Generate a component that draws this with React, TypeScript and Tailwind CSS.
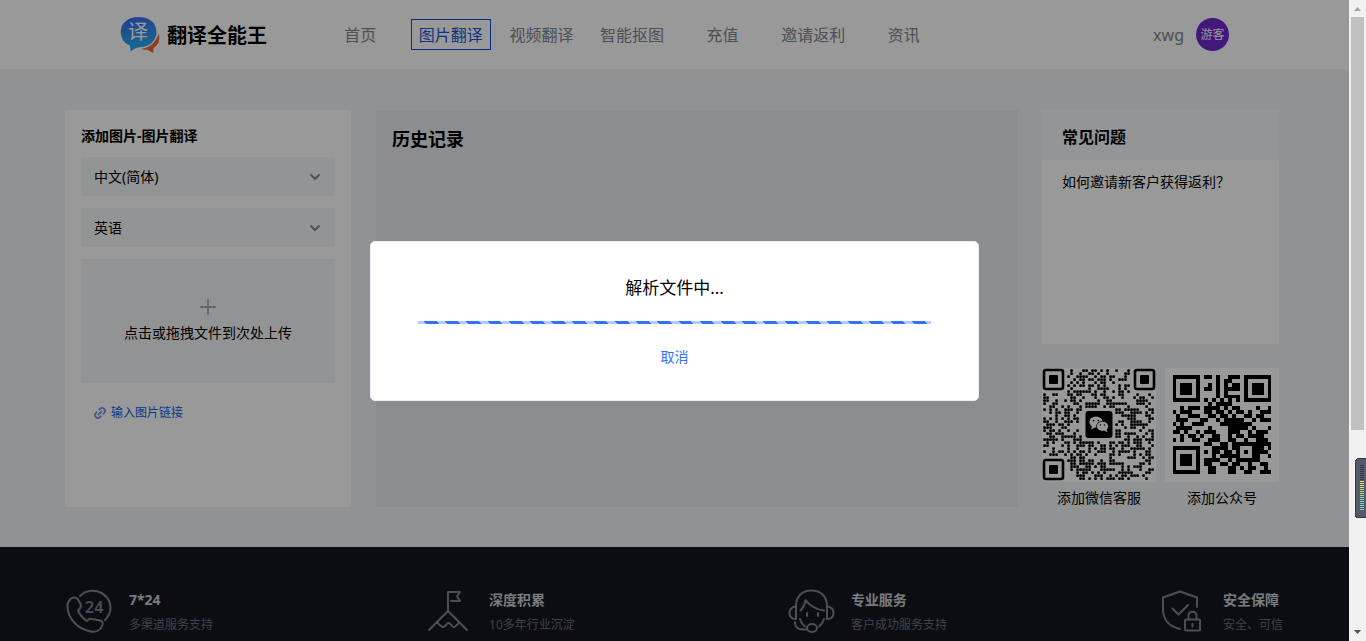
import type { ReactNode } from "react";
import { ChevronDown, Link2, Plus } from "lucide-react";

const navItems = ["首页", "图片翻译", "视频翻译", "智能抠图", "充值", "邀请返利", "资讯"];

const officialCode = [
  "1111111011010011101111111",
  "1000001000010110001000001",
  "1011101001010101101011101",
  "1011101011010111101011101",
  "1011101000010100001011101",
  "1000001000010111101000001",
  "1111111010101010101111111",
  "0000000001011110000000000",
  "0010111011110101100001001",
  "1011100011011010110100111",
  "0100111001101101001101100",
  "0111000110010111110010111",
  "1010011100001111111100000",
  "0111100001000011111010001",
  "1101001011100011100101110",
  "0010110100110010110111100",
  "1010011001110011001001110",
  "0000000011001101111111111",
  "1111111000111101100011101",
  "1000001010110110101011110",
  "1011101000101111100011001",
  "1011101011110010111111000",
  "1011101011001101100100110",
  "1000001001100011010110010",
  "1111111001100011001100111",
];

// rounded-dot code with the three corners and the centre left free
function isDot(x: number, y: number) {
  const corner = (x < 8 && y < 8) || (x > 28 && y < 8) || (x < 8 && y > 28);
  const middle = x > 12 && x < 24 && y > 12 && y < 24;
  if (corner || middle) return false;
  let n = (x * 374761393 + y * 668265263) | 0;
  n = Math.imul(n ^ (n >>> 13), 1274126177);
  return ((n ^ (n >>> 16)) & 255) < 126;
}

function Finder({ x, y }: { x: number; y: number }) {
  return (
    <g>
      <rect x={x + 1} y={y + 1} width="19" height="19" rx="2" fill="none" stroke="#000" strokeWidth="2.6" />
      <rect x={x + 6} y={y + 6} width="9" height="9" rx="1" />
    </g>
  );
}

function WechatCode() {
  const dots: ReactNode[] = [];
  for (let y = 0; y < 37; y++) {
    for (let x = 0; x < 37; x++) {
      if (isDot(x, y)) {
        dots.push(<rect key={`${x}-${y}`} x={x * 3 + 1.2} y={y * 3 + 1.2} width="2.7" height="2.7" rx="0.9" />);
      }
    }
  }
  return (
    <svg viewBox="0 0 114 114" className="w-full bg-white" role="img" aria-label="微信客服二维码">
      {dots}
      <Finder x={1} y={1} />
      <Finder x={92} y={1} />
      <Finder x={1} y={91} />
      <rect x="43.5" y="43" width="27" height="27" rx="3" />
      <ellipse cx="54" cy="54" rx="6.6" ry="5.6" fill="#fff" />
      <path d="M50 58l-1 3.5 4-2z" fill="#fff" />
      <ellipse cx="60.5" cy="58.3" rx="6" ry="5" fill="#fff" stroke="#000" strokeWidth="0.8" />
      <path d="M62 62.5l3.5 1.8-.8-3.4z" fill="#fff" />
      <circle cx="51.6" cy="52.6" r="0.9" />
      <circle cx="56.3" cy="52.6" r="0.9" />
      <circle cx="58.4" cy="57" r="0.8" />
      <circle cx="62.4" cy="57" r="0.8" />
    </svg>
  );
}

function OfficialCode() {
  const d = officialCode
    .map((row, y) => [...row].map((c, x) => (c === "1" ? `M${x} ${y}h1v1h-1z` : "")).join(""))
    .join("");
  return (
    <svg viewBox="-1.9 -1.7 28.8 28.8" className="w-full bg-white" role="img" aria-label="公众号二维码">
      <path d={d} shapeRendering="crispEdges" />
    </svg>
  );
}

function Logo() {
  return (
    <a href="#" className="flex items-center gap-[7px]">
      <span className="relative block">
        <svg viewBox="0 0 40 38" className="h-[38px] w-10" aria-hidden="true">
          <defs>
            <linearGradient id="bubble" x1="0" y1="0" x2="0.2" y2="1">
              <stop offset="0" stopColor="#3f66f5" />
              <stop offset="1" stopColor="#25b0e8" />
            </linearGradient>
          </defs>
          <path d="M38.5 17.500c2.200 7-.5 11.500-5 14.500l-.3 5-6.200-3.400c-2 .4-4 .2-6-.6 9-1.500 15.500-7 17.500-15.500z" fill="#f0683a" />
          <path
            d="M18.500 1C29 1 36.500 6.500 36.500 16c0 9-7.500 15-16.500 15.300-3.500.2-6 1.700-9.300 4.200l-.8-6C4.500 27.500.800 22.500.800 16 .800 7 8 1 18.500 1z"
            fill="url(#bubble)"
          />
        </svg>
        <span className="absolute inset-x-0 top-0 pr-1 text-center text-xl leading-8 text-white">译</span>
      </span>
      <span className="pt-0.5 text-xl font-bold text-black">翻译全能王</span>
    </a>
  );
}

function Header() {
  return (
    <header className="flex h-[69px] items-center bg-white px-[120px]">
      <Logo />
      <nav className="ml-12 grid w-[634px] grid-cols-7 text-base text-[#7d8492]">
        {navItems.map((item, i) => (
          <a
            key={item}
            href="#"
            className={
              i === 1
                ? "mx-auto flex h-[31px] w-20 items-center justify-center border border-[#0050d8] text-[#1d55d8]"
                : "flex h-[31px] items-center justify-center"
            }
          >
            {item}
          </a>
        ))}
      </nav>
      <div className="ml-auto flex items-center gap-3">
        <span className="text-base text-[#7d8492]">xwg</span>
        <span className="flex size-[33px] items-center justify-center rounded-full bg-[#6e28cd] text-xs text-white">
          游客
        </span>
      </div>
    </header>
  );
}

function LanguageSelect({ label, value }: { label: string; value: string }) {
  return (
    <div className="relative mb-3 flex bg-[#f5f7fa]">
      <select
        aria-label={label}
        defaultValue={value}
        className="w-full appearance-none py-2 pr-8 pl-[13px] text-sm leading-[23px] text-black"
      >
        <option>{value}</option>
      </select>
      <ChevronDown className="pointer-events-none absolute top-3 right-3 size-4 text-[#85888f]" strokeWidth={3} />
    </div>
  );
}

function UploadCard() {
  return (
    <section className="mr-px w-[286px] shrink-0 bg-white px-4 pt-[15px]">
      <h2 className="mb-[11px] text-sm leading-[21px] font-bold">添加图片-图片翻译</h2>
      <LanguageSelect label="源语言" value="中文(简体)" />
      <LanguageSelect label="目标语言" value="英语" />
      <button className="flex h-[124px] w-full flex-col items-center justify-center bg-[#f3f5f8] pb-1 text-sm">
        <Plus className="size-6 text-[#a8abb8]" strokeWidth={2} />
        <span className="mt-1">点击或拖拽文件到次处上传</span>
      </button>
      <a href="#" className="mt-[22px] ml-3 flex items-center gap-1 text-xs text-[#155be8]">
        <Link2 className="size-[14px] -rotate-45 text-[#6f95e0]" strokeWidth={3} />
        输入图片链接
      </a>
    </section>
  );
}

function Sidebar() {
  return (
    <aside className="w-[237px] shrink-0">
      <section className="mb-6 h-[234px] bg-white">
        <h2 className="bg-[#f7f8fa] px-5 pt-[15px] pb-[11px] text-base font-bold">常见问题</h2>
        <a href="#" className="block px-5 py-3 text-sm">
          如何邀请新客户获得返利？
        </a>
      </section>
      <div className="grid grid-cols-2 gap-[9px] text-center text-sm leading-[19px]">
        <figure>
          <WechatCode />
          <figcaption className="mt-1.5">添加微信客服</figcaption>
        </figure>
        <figure>
          <OfficialCode />
          <figcaption className="mt-1.5">添加公众号</figcaption>
        </figure>
      </div>
    </aside>
  );
}

function PhoneIcon() {
  return (
    <>
      <path d="M14 7C19 1.500 28 0 35.500 4 44.500 9 48.500 21.500 39 31" />
      <path d="M4.500 10c2-2 6-2 7.500.5L14.500 15c1 2.500 0 4.500-2.500 6.500 2 4.500 5 8 9 10.500 1.500-2 3-2.500 5-2l8 1.500c2.500.5 3 2.500 2.500 4.500-1.500 5-6 7.500-11.500 6.500C12 40 1.500 30 1.500 17c0-3 1-5 3-7z" />
      <text x="19" y="24" fontSize="16" fill="currentColor" stroke="none" fontWeight="600">
        24
      </text>
    </>
  );
}

function MountainIcon() {
  return (
    <>
      <path d="M22 22V3h12l-3 4.500 3 4.500h-9" />
      <path d="M3 41l19-19 19 19" />
      <path d="M11 34c2 0 3 4 6 4s3-4 5.500-4 3 4 5.500 4 3-4 5.500-4" />
    </>
  );
}

function ServiceIcon() {
  return (
    <>
      <path d="M8 30V17C8 7 14.500 1.500 23.500 1.500S39 7 39 17v13" />
      <path d="M8 17.500c-4.500.5-6.500 3-6.500 6.500s2 6 6.500 6M39 17.500c4.500.5 6.500 3 6.500 6.500s-2 6-6.500 6" />
      <path d="M12.500 21.500C16 18 17 14.500 17.500 11c4.500 6 9.500 9.500 18.500 10.500M19 24v3M30 24v3" />
      <path d="M12 30c1 3.500 3 6 5 7.500M36 30c-1 3.500-3 6-5 7.500M7 33c0 5 3 7.500 8 7.500h4" />
      <ellipse cx="24" cy="39" rx="5" ry="4" />
    </>
  );
}

function ShieldIcon() {
  return (
    <>
      <path d="M37 18V8.500L20 2.500 3 8.500V20c0 10 6 17.500 17 20" />
      <path d="M12.500 19.500l6 6 9.500-9.500" />
      <rect x="25" y="30.500" width="15" height="11" rx="1" />
      <path d="M28.500 30.500v-4c0-5 8-5 8 0v4M32.500 35v2.500" />
    </>
  );
}

const features = [
  { title: "7*24", text: "多渠道服务支持", icon: <PhoneIcon /> },
  { title: "深度积累", text: "10多年行业沉淀", icon: <MountainIcon /> },
  { title: "专业服务", text: "客户成功服务支持", icon: <ServiceIcon /> },
  { title: "安全保障", text: "安全、可信", icon: <ShieldIcon /> },
];

function Footer() {
  return (
    <footer className="flex flex-1 justify-between bg-[#13161f] px-[66px] pt-[42px]">
      {features.map((f) => (
        <div key={f.title} className="flex h-12 items-start gap-4">
          <svg
            viewBox="0 0 47 46"
            className="h-[46px] w-[47px] text-[#7d8392]"
            fill="none"
            stroke="currentColor"
            strokeWidth="2"
            strokeLinecap="round"
            strokeLinejoin="round"
            aria-hidden="true"
          >
            {f.icon}
          </svg>
          <div>
            <h3 className="text-sm leading-[22px] font-bold text-[#c9cdd6]">{f.title}</h3>
            <p className="mt-[3px] text-xs leading-[22px] text-[#6c707b]">{f.text}</p>
          </div>
        </div>
      ))}
    </footer>
  );
}

function ParsingDialog() {
  return (
    <div className="absolute inset-0 flex items-center justify-center bg-black/40">
      <div
        role="dialog"
        aria-label="解析文件中"
        className="flex w-[609px] flex-col items-center rounded-[5px] border border-[#ebeef5] bg-white px-[47px] pt-[34px] pb-8"
      >
        <p className="text-[17px] leading-6">解析文件中...</p>
        <div
          role="progressbar"
          aria-label="解析进度"
          className="mt-[21px] h-[3px] w-full bg-[repeating-linear-gradient(45deg,#b6cbfb_0px,#b6cbfb_6px,#3370ff_6px,#3370ff_15px)]"
        />
        <button className="mt-[22px] text-sm leading-[22px] text-[#3370ff]">取消</button>
      </div>
    </div>
  );
}

function Scrollbar() {
  return (
    <div className="flex w-[17px] shrink-0 flex-col items-center justify-between bg-[#f1f1f1]" aria-hidden="true">
      <div className="flex w-full flex-col items-center">
        <svg viewBox="0 0 17 17" className="size-[17px] text-[#a3a3a3]" fill="currentColor">
          <path d="M5 11h7L8.500 7z" />
        </svg>
        <div className="h-[413px] w-[13px] bg-[#c1c1c1]" />
      </div>
      <svg viewBox="0 0 17 17" className="size-[17px] text-[#505050]" fill="currentColor">
        <path d="M5 6h7l-3.500 4z" />
      </svg>
    </div>
  );
}

function meterColor(i: number) {
  if (i < 8) return "#343842";
  if (i < 12) return "#e6d76a";
  if (i < 17) return "#a6d98a";
  return "#6fd6c0";
}

function EdgeMeter() {
  return (
    <svg
      viewBox="0 0 11 60"
      className="absolute top-[458px] right-0 h-[60px] w-[11px]"
      shapeRendering="crispEdges"
      aria-hidden="true"
    >
      <rect x="0.500" y="0.500" width="16" height="59" rx="3" fill="#545a6a" stroke="#363a45" />
      {Array.from({ length: 23 }, (_, i) => (
        <rect key={i} x="5" y={7 + i * 2} width="4" height="1" fill={meterColor(i)} />
      ))}
    </svg>
  );
}

export default function App() {
  return (
    <div className="relative flex h-screen overflow-hidden font-['Noto_Sans','Noto_Sans_CJK_SC',sans-serif] text-black">
      <div className="relative flex min-w-0 flex-1 flex-col bg-[#f1f3f6]">
        <Header />
        <main className="flex gap-6 pt-[41px] pr-[70px] pb-10 pl-[65px]">
          <UploadCard />
          <section className="h-[397px] min-w-0 flex-1 bg-[#e9ebf0] p-4">
            <h2 className="text-lg leading-[26px] font-bold">历史记录</h2>
          </section>
          <Sidebar />
        </main>
        <Footer />
        <ParsingDialog />
      </div>
      <Scrollbar />
      <EdgeMeter />
    </div>
  );
}
